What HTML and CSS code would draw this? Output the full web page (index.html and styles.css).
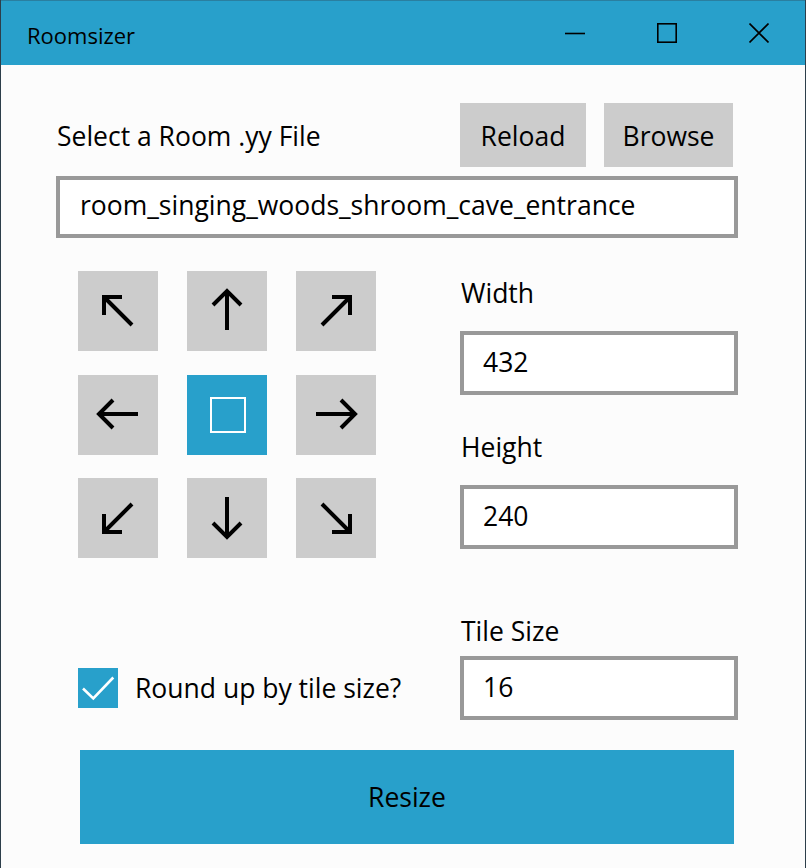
FILE: index.html
```html
<!DOCTYPE html>
<html>
<head>
<meta charset="utf-8">
<title>Roomsizer</title>
<link rel="stylesheet" href="styles.css">
</head>
<body>
<div class="window">
  <header class="titlebar">
    <span class="title">Roomsizer</span>
    <div class="caption-buttons">
      <span class="cap-btn"><svg width="20" height="20" viewBox="0 0 20 20"><line x1="0" y1="10.5" x2="20" y2="10.5" stroke="#000" stroke-width="1.6"/></svg></span>
      <span class="cap-btn"><svg width="20" height="20" viewBox="0 0 20 20"><rect x="0.8" y="0.8" width="18.4" height="18.4" fill="none" stroke="#000" stroke-width="1.6"/></svg></span>
      <span class="cap-btn"><svg width="20" height="20" viewBox="0 0 20 20"><path d="M0.5 0.5 L19.5 19.5 M19.5 0.5 L0.5 19.5" fill="none" stroke="#000" stroke-width="1.6"/></svg></span>
    </div>
  </header>
  <main class="content">
    <div class="file-row">
      <span class="file-label">Select a Room .yy File</span>
      <button class="btn btn-reload">Reload</button>
      <button class="btn btn-browse">Browse</button>
    </div>
    <div class="textbox file-box">room_singing_woods_shroom_cave_entrance</div>

    <div class="middle">
      <div class="anchor-grid">
        <button class="anchor"><svg viewBox="0 0 80 80"><path d="M26 44 V26 H44 M26 26 L54 54"/></svg></button>
        <button class="anchor"><svg viewBox="0 0 80 80"><path d="M26 34 L40 20 L54 34 M40 20 V59"/></svg></button>
        <button class="anchor"><svg viewBox="0 0 80 80"><path d="M36 26 H54 V44 M54 26 L26 54"/></svg></button>
        <button class="anchor"><svg viewBox="0 0 80 80"><path d="M35 25 L21 39 L35 53 M21 39 H60"/></svg></button>
        <button class="anchor anchor-active"><span class="center-square"></span></button>
        <button class="anchor"><svg viewBox="0 0 80 80"><path d="M45 25 L59 39 L45 53 M59 39 H20"/></svg></button>
        <button class="anchor"><svg viewBox="0 0 80 80"><path d="M26 36 V54 H44 M26 54 L54 26"/></svg></button>
        <button class="anchor"><svg viewBox="0 0 80 80"><path d="M26 45 L40 59 L54 45 M40 59 V19"/></svg></button>
        <button class="anchor"><svg viewBox="0 0 80 80"><path d="M54 36 V54 H36 M54 54 L26 26"/></svg></button>
      </div>
      <div class="fields">
        <div class="field-label">Width</div>
        <div class="textbox num-box">432</div>
        <div class="field-label field-label-next">Height</div>
        <div class="textbox num-box">240</div>
      </div>
    </div>

    <div class="tile-row">
      <div class="check-wrap">
        <span class="checkbox"><svg width="40" height="40" viewBox="0 0 40 40"><path d="M5 20.5 L15.3 30.5 L35.3 9.5" fill="none" stroke="#fff" stroke-width="2.6"/></svg></span>
        <span class="check-label">Round up by tile size?</span>
      </div>
      <div class="fields tile-field">
        <div class="field-label">Tile Size</div>
        <div class="textbox num-box tile-box">16</div>
      </div>
    </div>

    <button class="resize">Resize</button>
  </main>
</div>
</body>
</html>
```

FILE: styles.css
```css
* {
  box-sizing: border-box;
  margin: 0;
  padding: 0;
}

html, body {
  width: 806px;
  height: 868px;
  overflow: hidden;
}

body {
  font-family: "Open Sans", "Noto Sans", sans-serif;
  font-size: 26.5px;
  color: #000;
  background: #fcfcfc;
}

.window {
  width: 806px;
  height: 868px;
  border-left: 1px solid #2d3e4a;
  border-right: 1px solid #2d3e4a;
  background: #fcfcfc;
}

.titlebar {
  height: 65px;
  background: #28a0cb;
  border-top: 1px solid #2a7fa0;
  display: flex;
  align-items: center;
}

.title {
  flex: 1;
  padding-left: 26px;
  padding-top: 3px;
  font-size: 22px;
  line-height: 30px;
}

.caption-buttons {
  display: flex;
  height: 100%;
}

.cap-btn {
  width: 92px;
  display: flex;
  align-items: center;
  justify-content: center;
}

.cap-btn svg {
  display: block;
}

.content {
  padding-left: 55px;
  padding-right: 67px;
}

.file-row {
  margin-top: 38px;
  height: 64px;
  display: flex;
  align-items: center;
  padding-right: 5px;
}

.file-label {
  flex: 1;
  padding-left: 1px;
  padding-top: 1px;
}

.btn {
  height: 64px;
  border: none;
  background: #cccccc;
  font: inherit;
  color: #000;
  padding-top: 1px;
}

.btn-reload {
  width: 126px;
}

.btn-browse {
  width: 129px;
  margin-left: 18px;
}

.textbox {
  background: #fff;
  border: 4px solid #999999;
  display: flex;
  align-items: center;
}

.file-box {
  margin-top: 9px;
  height: 62px;
  padding-left: 20px;
  padding-bottom: 5px;
  white-space: nowrap;
}

.middle {
  margin-top: 33px;
  display: flex;
}

.anchor-grid {
  margin-left: 22px;
  display: grid;
  grid-template-columns: repeat(3, 80px);
  grid-template-rows: repeat(3, 80px);
  column-gap: 29px;
  row-gap: 23.5px;
}

.anchor {
  width: 80px;
  height: 80px;
  border: none;
  background: #cccccc;
  display: flex;
  align-items: center;
  justify-content: center;
}

.anchor svg {
  width: 80px;
  height: 80px;
  display: block;
  fill: none;
  stroke: #000;
  stroke-width: 4;
  stroke-linecap: butt;
  stroke-linejoin: miter;
}

.anchor-active {
  background: #28a0cb;
}

.center-square {
  width: 36px;
  height: 36px;
  border: 2px solid #fff;
  margin-left: 2px;
}

.fields {
  margin-left: 84px;
  width: 278px;
  padding-top: 6px;
}

.field-label {
  height: 32px;
  line-height: 32px;
  padding-left: 1px;
  margin-bottom: 22px;
}

.field-label-next {
  margin-top: 36px;
}

.num-box {
  height: 64px;
  padding-left: 19px;
  padding-bottom: 3px;
}

.tile-row {
  margin-top: 57px;
  display: flex;
}

.check-wrap {
  margin-left: 22px;
  width: 382px;
  align-self: flex-end;
  height: 64px;
  display: flex;
  align-items: center;
}

.checkbox {
  width: 40px;
  height: 40px;
  background: #28a0cb;
  display: block;
}

.checkbox svg {
  display: block;
}

.check-label {
  margin-left: 17px;
}

.tile-field {
  margin-left: 0;
  padding-top: 0;
}

.tile-field .field-label {
  margin-bottom: 9px;
}

.tile-box {
  padding-bottom: 2px;
}

.resize {
  display: block;
  margin-top: 30px;
  margin-left: 24px;
  width: 654px;
  height: 94px;
  border: none;
  background: #28a0cb;
  font: inherit;
  color: #000;
}
```
